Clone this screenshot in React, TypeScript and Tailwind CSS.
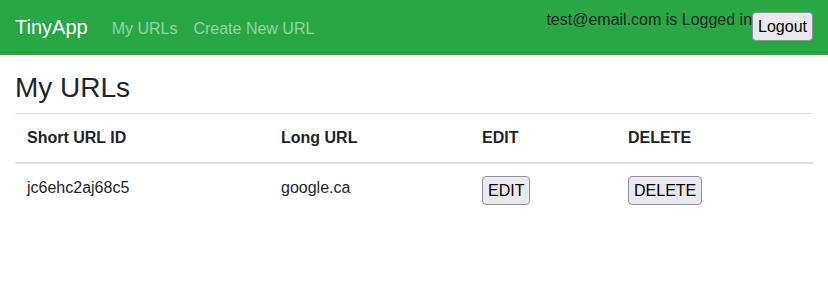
import React from 'react';

type UrlRow = { id: string; longUrl: string };

const urls: UrlRow[] = [{ id: 'jc6ehc2aj68c5', longUrl: 'google.ca' }];

const btn =
  'block h-[29px] px-[5px] border border-[#8f8f9d] rounded-[4px] bg-[#e9e9ed] text-[16px] leading-[27px] text-black';

const App: React.FC = () => {
  return (
    <div className="min-h-screen bg-white text-[#212529] font-['Liberation_Sans',Arial,sans-serif]">
      {/* navbar */}
      <nav className="h-[55px] bg-[#28a745] px-[15px] flex items-start">
        <div className="flex items-baseline pt-[12px]">
          <span className="text-[20px] leading-[30px] text-white mr-[16px]">TinyApp</span>
          <a className="px-[8px] text-[16px] leading-[24px] text-white/50">My URLs</a>
          <a className="px-[8px] text-[16px] leading-[24px] text-white/50">Create New URL</a>
        </div>
        <div className="ml-auto flex items-start">
          <span className="mt-[8px] text-[16px] leading-[24px] text-[#212529]">test@email.com is Logged in</span>
          <button className={btn + ' mt-[12px]'}>Logout</button>
        </div>
      </nav>

      <main className="px-[15px] pt-[16px]">
        <h3 className="text-[28px] leading-[1.2] font-normal mb-[8px]">My URLs</h3>
        <table className="w-[798px] border-collapse text-[16px] leading-[24px]">
          <thead>
            <tr>
              <th className="w-[254px] text-left font-bold p-[12px] border-t border-b-2 border-[#dee2e6]">Short URL ID</th>
              <th className="w-[201px] text-left font-bold p-[12px] border-t border-b-2 border-[#dee2e6]">Long URL</th>
              <th className="w-[146px] text-left font-bold p-[12px] border-t border-b-2 border-[#dee2e6]">EDIT</th>
              <th className="text-left font-bold p-[12px] border-t border-b-2 border-[#dee2e6]">DELETE</th>
            </tr>
          </thead>
          <tbody>
            {urls.map(u => (
              <tr key={u.id}>
                <td className="p-[12px] align-top">{u.id}</td>
                <td className="p-[12px] align-top">{u.longUrl}</td>
                <td className="p-[12px] align-top">
                  <button className={btn}>EDIT</button>
                </td>
                <td className="p-[12px] align-top">
                  <button className={btn}>DELETE</button>
                </td>
              </tr>
            ))}
          </tbody>
        </table>
      </main>
    </div>
  );
};

export default App;
